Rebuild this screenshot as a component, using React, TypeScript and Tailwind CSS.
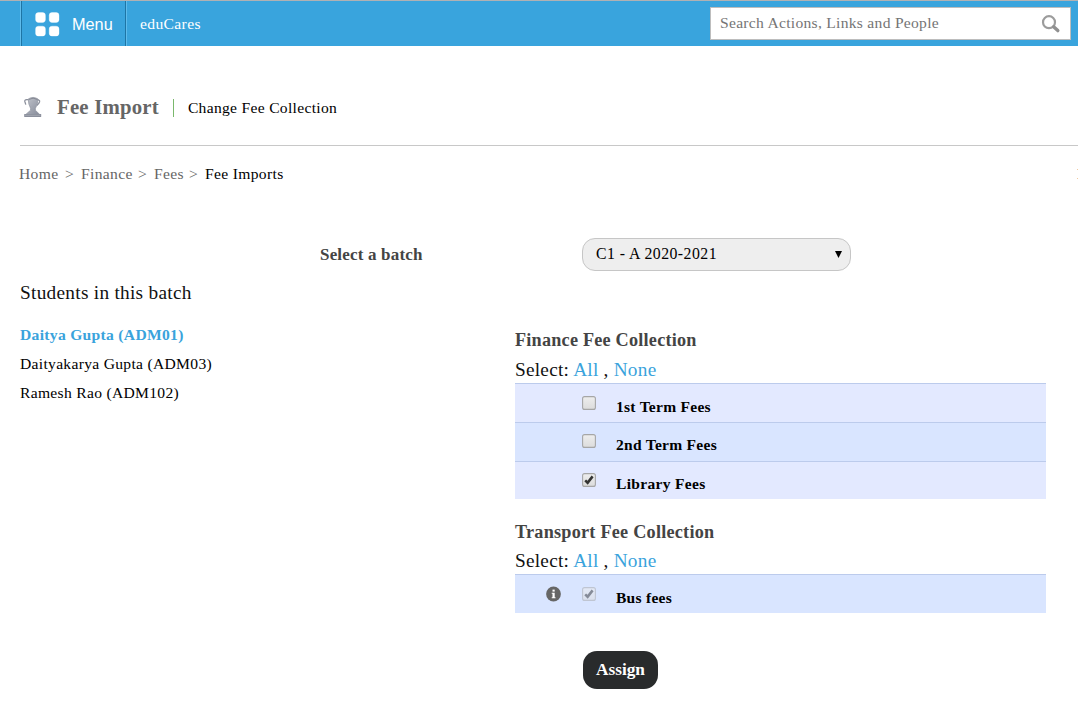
import React from 'react';

function TrophyIcon() {
  return (
    <svg width="20" height="22" viewBox="0 0 20 22" className="block shrink-0">
      <defs>
        <linearGradient id="cup" x1="0" y1="0" x2="1" y2="1">
          <stop offset="0" stopColor="#c3c6cd" />
          <stop offset="1" stopColor="#858a99" />
        </linearGradient>
      </defs>
      <path d="M6 3.6H3.6Q1.6 3.8 1.8 5.4L2.8 8.6M14.5 4H15.8Q17 4.4 16.6 5.8Q15.8 8.2 13.8 9.4" fill="none" stroke="#8b8f9b" strokeWidth="1.3" />
      <path d="M5.2 3Q10 -.2 15 3Q14.8 9 12.4 12.4V14.2L17 18.8H2.4L7.6 14.2V12.4Q5.4 8.6 5.2 3Z" fill="url(#cup)" stroke="#8e929d" strokeWidth=".7" />
      <path d="M6 3.4Q10 1 14.4 3.4" fill="none" stroke="#777b87" strokeWidth=".8" />
      <rect x="1.2" y="18" width="17" height="3" rx=".5" fill="#8a8e9b" />
      <path d="M2 19.3H17.4" stroke="#a9adb7" strokeWidth=".8" />
    </svg>
  );
}

function SearchIcon() {
  return (
    <svg width="20" height="20" viewBox="0 0 20 20" className="block shrink-0">
      <circle cx="8" cy="8.2" r="6" fill="none" stroke="#9c9c9c" strokeWidth="2.2" />
      <path d="M12.6 12.8L16.8 16.6" stroke="#909090" strokeWidth="3.4" strokeLinecap="round" />
    </svg>
  );
}

function MenuIcon() {
  return (
    <svg width="26" height="26" viewBox="0 0 26 26" className="block shrink-0">
      <g fill="#fff" stroke="#fff" strokeOpacity=".35">
        <rect x=".6" y=".6" width="9.8" height="9.8" rx="2.8" />
        <rect x="14.2" y=".6" width="9.8" height="9.8" rx="2.8" />
        <rect x=".6" y="14.2" width="9.8" height="9.8" rx="2.8" />
        <rect x="14.2" y="14.2" width="9.8" height="9.8" rx="2.8" />
      </g>
    </svg>
  );
}

function InfoIcon() {
  return (
    <svg width="16" height="16" viewBox="0 0 16 16" className="block">
      <circle cx="7.5" cy="8" r="7.4" fill="#666" />
      <rect x="6.5" y="3.6" width="2.2" height="2" fill="#fff" />
      <path d="M5.7 6.8H8.7V11.2H9.5V12.2H5.7V11.2H6.5V7.8H5.7Z" fill="#fff" />
    </svg>
  );
}

function Checkbox({ checked, disabled }: { checked?: boolean; disabled?: boolean }) {
  return (
    <svg width="14" height="14" viewBox="0 0 14 14" role="checkbox" aria-checked={!!checked} aria-disabled={!!disabled} className={disabled ? 'block opacity-50' : 'block'}>
      <defs>
        <linearGradient id="box" x1="0" y1="0" x2="0" y2="1">
          <stop offset="0" stopColor="#eeeeee" />
          <stop offset="1" stopColor="#dcdcdc" />
        </linearGradient>
      </defs>
      <rect x=".6" y=".6" width="12.8" height="12.8" rx="2" fill="url(#box)" stroke="#a6a6a6" strokeWidth="1.1" />
      {checked && <path d="M3.2 7.4L5.6 9.7L10.6 3.4" fill="none" stroke="#333" strokeWidth="2.6" />}
    </svg>
  );
}

function SelectLinks() {
  return (
    <div className="whitespace-pre text-[19.3px] leading-[24px] tracking-[0.24px] text-[#111]">
      Select: <a className="text-[#3aa3dc]">All</a> , <a className="text-[#3aa3dc]">None</a>
    </div>
  );
}

type RowProps = { label: string; box: string; text: string; mark: string; checked?: boolean; disabled?: boolean; info?: boolean };

function FeeRow({ label, box, text, mark, checked, disabled, info }: RowProps) {
  return (
    <div className={`flex items-start border-t border-[#bccbec] ${box}`}>
      <div className="flex w-[67px] justify-end pr-[20px] pt-[11px]">{info && <InfoIcon />}</div>
      <div className={`w-[34px] ${mark}`}>
        <Checkbox checked={checked} disabled={disabled} />
      </div>
      <div className={`text-[15.5px] font-bold leading-[20px] text-black ${text}`}>{label}</div>
    </div>
  );
}

export default function App() {
  return (
    <div className="h-[704px] w-[1078px] overflow-hidden whitespace-nowrap bg-white font-['Liberation_Serif',serif] text-black">
      <header className="flex h-[46px] items-start border-t border-[#b1b1b3] bg-[#39a4dd]">
        <div className="h-[45px] w-[21px] border-r border-[#5fbcec]" />
        <div className="flex h-[45px] w-[105px] border-x border-[#1e75a5] pl-[13px] pt-[11px]">
          <MenuIcon />
          <span className="ml-[11px] font-['Liberation_Sans',sans-serif] text-[16.3px] leading-[24px] text-white">Menu</span>
        </div>
        <div className="h-[45px] border-l border-[#5fbcec] pl-[13px] pt-[13px] text-[15.6px] leading-[20px] tracking-[0.35px] text-white">eduCares</div>
        <div className="ml-auto mr-[7px] mt-[6px] flex h-[33px] w-[361px] justify-between border border-[#bdbdbd] bg-white pl-[9px] pr-[9px]">
          <span className="pt-[5px] text-[15.6px] leading-[20px] tracking-[0.28px] text-[#757575]">Search Actions, Links and People</span>
          <span className="pt-[6px]"><SearchIcon /></span>
        </div>
      </header>

      <div className="ml-[20px] flex h-[100px] items-start border-b border-[#c8c8c8] pt-[49px]">
        <div className="ml-[3px] pt-[1px]"><TrophyIcon /></div>
        <h1 className="ml-[14px] text-[20.8px] font-bold leading-[24px] tracking-[0.2px] text-[#666]">Fee Import</h1>
        <div className="ml-[14px] mt-[4px] h-[18px] w-px bg-[#7ab86c]" />
        <a className="ml-[14px] mt-[3px] text-[15.6px] leading-[20px] tracking-[0.3px]">Change Fee Collection</a>
      </div>

      <nav className="flex pl-[19px] pt-[18px] text-[15.6px] leading-[20px] tracking-[0.33px] text-[#666]">
        <span className="w-[46px]">Home</span>
        <span className="w-[16px]">&gt;</span>
        <span className="w-[57px]">Finance</span>
        <span className="w-[16px]">&gt;</span>
        <span className="w-[35px]">Fees</span>
        <span className="w-[16px]">&gt;</span>
        <span className="text-black">Fee Imports</span>
        <span className="ml-auto mt-[5px] h-[10px] w-px border-y border-[#f0c9a0]" />
      </nav>

      <div className="mt-[54px] flex h-[33px]">
        <label className="ml-[320px] w-[262px] pt-[7px] text-[17px] font-bold leading-[20px] tracking-[0.18px] text-[#444]">Select a batch</label>
        <div className="flex w-[269px] justify-between rounded-[13px] border border-[#c6c6c6] bg-[#eeeeee] pl-[13px] pr-[8px]">
          <span className="pt-[5px] text-[15.8px] leading-[20px] tracking-[0.46px]">C1 - A 2020-2021</span>
          <svg width="7" height="7" viewBox="0 0 7 7" className="mt-[12px]"><path d="M0 0H7L3.5 7Z" /></svg>
        </div>
      </div>

      <div className="flex">
        <section className="w-[495px] pl-[20px] pt-[10px]">
          <h2 className="text-[19.3px] leading-[24px] tracking-[0.28px] text-[#111]">Students in this batch</h2>
          <ul className="mt-[15px] text-[15.6px] leading-[29px] tracking-[0.3px]">
            <li className="font-bold">
              <a className="text-[#3aa3dc]">Daitya Gupta (ADM01)</a>
            </li>
            <li>Daityakarya Gupta (ADM03)</li>
            <li>Ramesh Rao (ADM102)</li>
          </ul>
        </section>

        <section className="ml-[20px] w-[531px] pt-[59px]">
          <h3 className="text-[18.2px] font-bold leading-[20px] tracking-[0.22px] text-[#444]">Finance Fee Collection</h3>
          <div className="mt-[8px]"><SelectLinks /></div>
          <div className="mt-[1px]">
            <FeeRow label="1st Term Fees" box="h-[39px] bg-[#e3e9ff]" text="pt-[13px] tracking-[0.28px]" mark="pt-[12px]" />
            <FeeRow label="2nd Term Fees" box="h-[39px] bg-[#d9e5ff]" text="pt-[12px] tracking-[0.28px]" mark="pt-[11px]" />
            <FeeRow label="Library Fees" box="h-[38px] bg-[#e3e9ff]" text="pt-[12px] tracking-[0.33px]" mark="pt-[11px]" checked />
          </div>
          <h3 className="mt-[23px] text-[18.2px] font-bold leading-[20px] tracking-[0.24px] text-[#444]">Transport Fee Collection</h3>
          <div className="mt-[7px]"><SelectLinks /></div>
          <div className="mt-px">
            <FeeRow label="Bus fees" box="h-[39px] bg-[#d9e5ff]" text="pt-[13px] tracking-[0.28px]" mark="pt-[12px]" checked disabled info />
          </div>
          <button className="ml-[68px] mt-[38px] block h-[38px] w-[75px] rounded-[14px] bg-[#292b2c] text-[17.3px] font-bold leading-[36px] text-white">Assign</button>
        </section>
      </div>
    </div>
  );
}
